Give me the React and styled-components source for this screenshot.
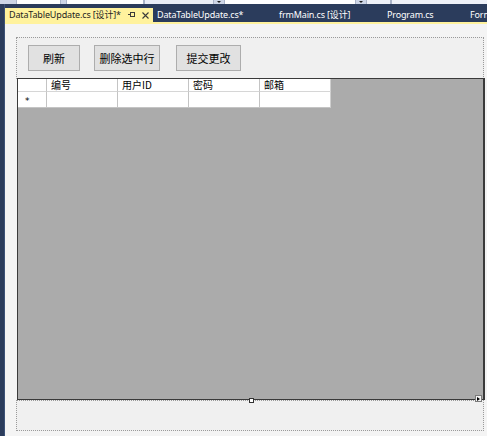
import React from "react";
import styled, { createGlobalStyle } from "styled-components";

const Global = createGlobalStyle`
  html, body { margin: 0; padding: 0; }
  body { width: 487px; height: 436px; overflow: hidden; background: #2b3c5c; }
`;

const Window = styled.div`
  width: 487px;
  height: 436px;
  display: flex;
  flex-direction: column;
  background: #2b3c5c;
  font-family: "Noto Sans", "Noto Sans CJK SC", sans-serif;
  overflow: hidden;
`;

const TopStrip = styled.div`
  height: 4px;
  flex: none;
  display: flex;
  align-items: stretch;
  background: #cdd5e6;
`;

const Combo = styled.div`
  flex: none;
  width: ${(p) => p.$w}px;
  margin-left: ${(p) => p.$ml || 0}px;
  background: ${(p) => p.$bg || "#ffffff"};
  border-left: 1px solid #a9b3c8;
  border-right: 1px solid #a9b3c8;
  box-sizing: border-box;
`;

const DropArrow = styled.span`
  flex: none;
  width: 0;
  height: 0;
  margin: 1px 3px 0 3px;
  border-left: 2px solid transparent;
  border-right: 2px solid transparent;
  border-top: 2px solid #1e1e1e;
`;

const Body = styled.div`
  flex: 1;
  display: flex;
  min-height: 0;
`;

const LeftRail = styled.div`
  width: 5px;
  flex: none;
  background: #2b3c5c;
  border-right: 1px solid #3d5277;
  box-sizing: border-box;
`;

const DocColumn = styled.div`
  flex: 1;
  display: flex;
  flex-direction: column;
  min-width: 0;
`;

const TabBar = styled.div`
  height: 18px;
  flex: none;
  display: flex;
  align-items: flex-end;
  white-space: nowrap;
`;

const Tab = styled.div`
  flex: none;
  height: 14px;
  display: flex;
  align-items: center;
  padding: ${(p) => (p.$active ? "0 4px 0 4px" : "0 0 0 4px")};
  width: ${(p) => (p.$w ? `${p.$w}px` : "auto")};
  box-sizing: border-box;
  background: ${(p) => (p.$active ? "#fff29d" : "transparent")};
  color: ${(p) => (p.$active ? "#1e1e1e" : "#ffffff")};
  font-size: 9px;
  letter-spacing: -0.15px;
  line-height: 14px;
`;

const TabText = styled.span`
  flex: none;
`;

const TabIcons = styled.span`
  display: flex;
  align-items: center;
  margin-left: auto;
  gap: 6px;
`;

const TabLine = styled.div`
  height: 2px;
  flex: none;
  background: #fff29d;
`;

const Surface = styled.div`
  flex: 1;
  background: #f4f4f4;
  padding: 13px 2px 5px 11px;
  display: flex;
  min-height: 0;
`;

const FormArea = styled.div`
  width: 469px;
  flex: none;
  display: flex;
  flex-direction: column;
`;

const DottedPanel = styled.div`
  flex: none;
  height: ${(p) => p.$h}px;
  margin-right: 1px;
  box-sizing: border-box;
  border: 1px dotted #9a9a9a;
  background: #f0f0f0;
  display: flex;
  align-items: flex-start;
  padding: 7px 0 0 11px;
`;

const WinButton = styled.button`
  flex: none;
  width: ${(p) => p.$w}px;
  height: 26px;
  margin-left: ${(p) => p.$ml || 0}px;
  padding: 0;
  background: #e1e1e1;
  border: 1px solid #adadad;
  color: #000;
  font-family: "Noto Sans CJK SC", sans-serif;
  font-size: 11px;
  line-height: 24px;
`;

const Grid = styled.div`
  flex: 1;
  position: relative;
  margin-top: -1px;
  margin-left: 1px;
  background: #ababab;
  border: 1px solid #3a3a3a;
  border-right: 2px solid #3a3a3a;
`;

const GridTable = styled.div`
  display: grid;
  grid-template-columns: 29px repeat(4, 71px);
  grid-template-rows: 13px 16px;
  width: 313px;
  background: #ffffff;
`;

const Cell = styled.div`
  box-sizing: border-box;
  background: #ffffff;
  border-right: 1px solid ${(p) => (p.$last ? "#cfcfcf" : "#c4c4c4")};
  border-bottom: 1px solid ${(p) => (p.$header ? "#d6d6d6" : "#c4c4c4")};
  font-family: "Noto Sans CJK SC", sans-serif;
  font-size: 10px;
  line-height: 12px;
  color: #000;
  padding-left: 4px;
  white-space: nowrap;
  display: flex;
  align-items: ${(p) => (p.$header ? "flex-start" : "center")};
`;

const RowMark = styled.span`
  font-family: "DejaVu Sans", sans-serif;
  font-size: 9px;
  margin-left: 3px;
  margin-top: 3px;
`;

const Handle = styled.div`
  position: absolute;
  bottom: -4px;
  left: 231px;
  width: 5px;
  height: 5px;
  background: #ffffff;
  border: 1px solid #333;
  box-sizing: border-box;
`;

const SmartTag = styled.div`
  position: absolute;
  right: 1px;
  bottom: -3px;
  width: 7px;
  height: 7px;
  background: #f4f4f4;
  border: 1px solid #7a7a7a;
  box-sizing: border-box;
  display: flex;
  align-items: center;
  justify-content: center;
`;

const Tri = styled.span`
  width: 0;
  height: 0;
  border-top: 2px solid transparent;
  border-bottom: 2px solid transparent;
  border-left: 3px solid #000;
`;

const columns = ["编号", "用户ID", "密码", "邮箱"];

export default function App() {
  return (
    <>
      <Global />
      <Window>
        <TopStrip>
          <Combo $ml={16} $w={45} />
          <Combo $ml={5} $w={78} />
          <Combo $w={70} $bg="#e9edf6" />
          <DropArrow />
          <Combo $w={132} />
          <DropArrow />
          <Combo $w={25} $bg="#eef1f8" />
          <Combo $w={97} $bg="#eef1f8" />
        </TopStrip>
        <Body>
          <LeftRail />
          <DocColumn>
            <TabBar>
              <Tab $active $w={148}>
                <TabText>DataTableUpdate.cs [设计]*</TabText>
                <TabIcons>
                  <svg width="8" height="6" viewBox="0 0 8 6">
                    <rect x="2.5" y="0.5" width="4" height="4" fill="none" stroke="#3a3a3a" strokeWidth="1" />
                    <line x1="0" y1="2.5" x2="2.5" y2="2.5" stroke="#3a3a3a" strokeWidth="1" />
                    <line x1="6.5" y1="0" x2="6.5" y2="5" stroke="#3a3a3a" strokeWidth="1" />
                  </svg>
                  <svg width="7" height="7" viewBox="0 0 7 7">
                    <path d="M0.5 0.5 L6.5 6.5 M6.5 0.5 L0.5 6.5" stroke="#3a3a3a" strokeWidth="1.1" />
                  </svg>
                </TabIcons>
              </Tab>
              <Tab $w={122}>
                <TabText>DataTableUpdate.cs*</TabText>
              </Tab>
              <Tab $w={108}>
                <TabText>frmMain.cs [设计]</TabText>
              </Tab>
              <Tab $w={83}>
                <TabText>Program.cs</TabText>
              </Tab>
              <Tab>
                <TabText>Form1.cs</TabText>
              </Tab>
            </TabBar>
            <TabLine />
            <Surface>
              <FormArea>
                <DottedPanel $h={42}>
                  <WinButton $w={52}>刷新</WinButton>
                  <WinButton $w={66} $ml={14}>删除选中行</WinButton>
                  <WinButton $w={65} $ml={16}>提交更改</WinButton>
                </DottedPanel>
                <Grid>
                  <GridTable>
                    <Cell $header />
                    {columns.map((c, i) => (
                      <Cell $header key={c} $last={i === 3}>
                        {c}
                      </Cell>
                    ))}
                    <Cell>
                      <RowMark>*</RowMark>
                    </Cell>
                    {columns.map((c, i) => (
                      <Cell key={c + "v"} $last={i === 3} />
                    ))}
                  </GridTable>
                  <Handle />
                  <SmartTag>
                    <Tri />
                  </SmartTag>
                </Grid>
                <DottedPanel $h={31} />
              </FormArea>
            </Surface>
          </DocColumn>
        </Body>
      </Window>
    </>
  );
}
